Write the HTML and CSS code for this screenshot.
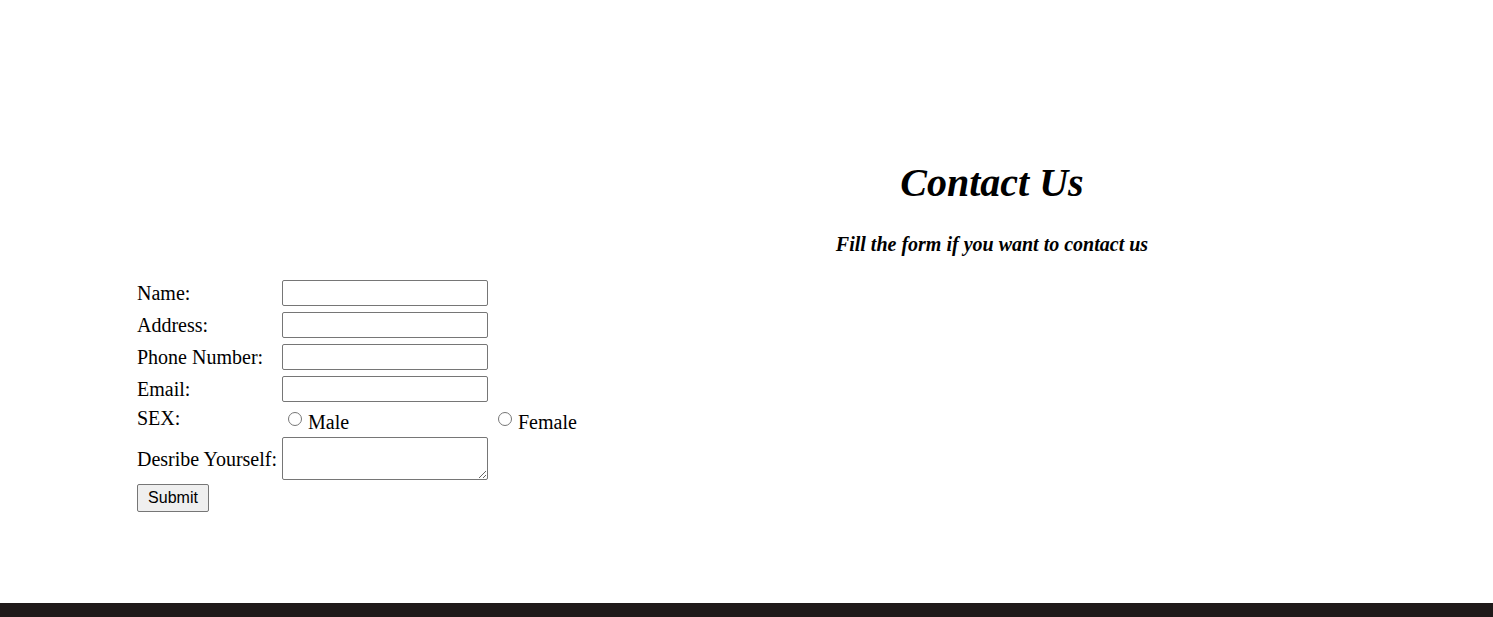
FILE: index.html
```html
<!DOCTYPE html>
<html>
<head>
<meta charset="utf-8">
<link rel="stylesheet" href="styles.css">
</head>
<body>
<main class="page">
  <header class="intro">
    <h1 class="title">Contact Us</h1>
    <h4 class="subtitle">Fill the form if you want to contact us</h4>
  </header>
  <form class="form">
    <label class="lbl">Name:</label>
    <input class="field" type="text">
    <span></span>
    <label class="lbl">Address:</label>
    <input class="field" type="text">
    <span></span>
    <label class="lbl">Phone Number:</label>
    <input class="field" type="text">
    <span></span>
    <label class="lbl">Email:</label>
    <input class="field" type="text">
    <span></span>
    <label class="lbl lbl-sex">SEX:</label>
    <span class="opt"><input class="radio" type="radio" name="sex">Male</span>
    <span class="opt"><input class="radio" type="radio" name="sex">Female</span>
    <label class="lbl lbl-area">Desribe Yourself:</label>
    <textarea class="area"></textarea>
    <span></span>
    <div class="actions"><button class="btn" type="button">Submit</button></div>
  </form>
</main>
<footer class="footer"></footer>
</body>
</html>
```

FILE: styles.css
```css
html, body {
  margin: 0;
  padding: 0;
  background: #fff;
}
body {
  font-family: "Liberation Serif", "Times New Roman", serif;
  font-size: 20px;
  color: #000;
  overflow: hidden;
}
.page {
  height: 603px;
  box-sizing: border-box;
  padding-top: 160px;
}
.intro {
  padding-left: 491px;
  text-align: center;
}
.title {
  margin: 0;
  font-size: 40px;
  line-height: 46px;
  font-weight: bold;
  font-style: italic;
}
.subtitle {
  margin: 27px 0 0 0;
  font-size: 20px;
  line-height: 22px;
  font-weight: bold;
  font-style: italic;
}
.form {
  margin: 25px 0 0 137px;
  display: grid;
  grid-template-columns: 145px 210px auto;
  grid-auto-rows: auto;
  row-gap: 6px;
  align-items: center;
  justify-content: start;
}
.lbl {
  line-height: 22px;
}
.field {
  box-sizing: border-box;
  width: 206px;
  height: 26px;
  margin: 0;
  border: 1px solid #767676;
  border-radius: 2px;
  font-size: 16px;
  padding: 1px 2px;
}
.opt {
  display: flex;
  align-items: flex-start;
  line-height: 22px;
  padding-top: 3px;
}
.lbl-sex {
  align-self: start;
  margin-top: -1px;
}
.radio {
  width: 14px;
  height: 14px;
  margin: 1px 6px 0 6px;
}
.lbl-area {
  margin-top: -2px;
}
.area {
  box-sizing: border-box;
  width: 206px;
  height: 43px;
  margin: -2px 0 0 0;
  border: 1px solid #767676;
  border-radius: 2px;
  resize: both;
}
.actions {
  grid-column: 1 / -1;
  margin-top: -2px;
}
.btn {
  box-sizing: border-box;
  height: 28px;
  width: 72px;
  padding: 0;
  font-family: "Liberation Sans", Arial, sans-serif;
  font-size: 16px;
  background: #efefef;
  border: 1px solid #767676;
  border-radius: 2px;
  color: #000;
}
.footer {
  height: 40px;
  background: #1f1a1a;
}
```
